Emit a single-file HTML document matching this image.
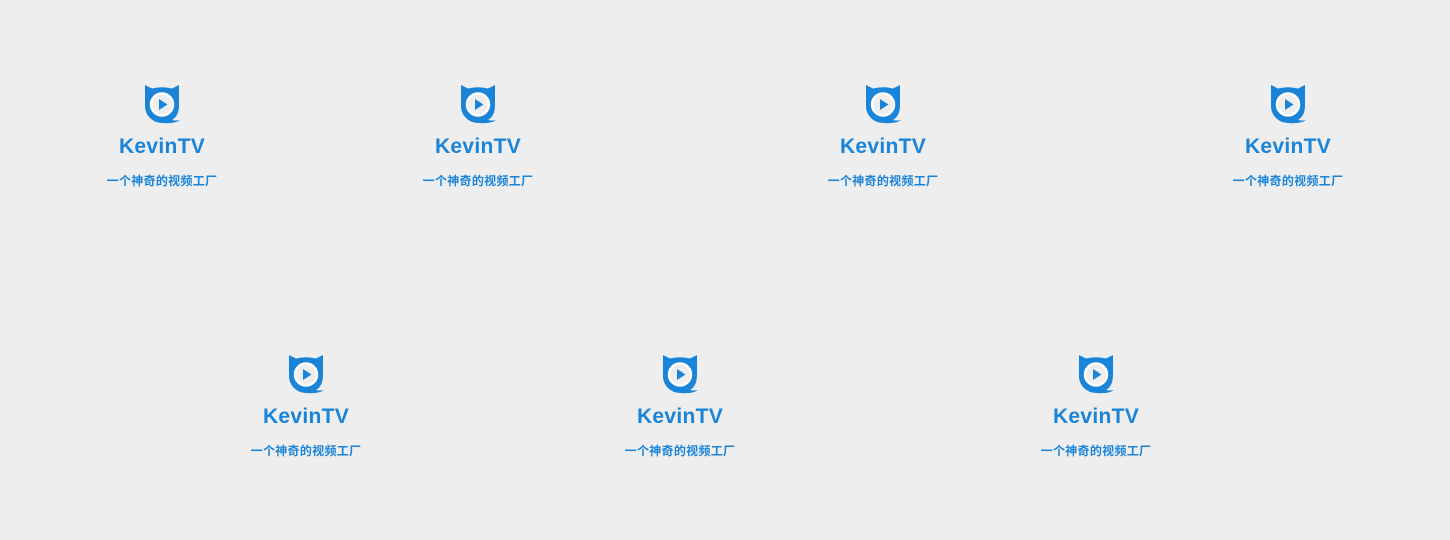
<!DOCTYPE html>
<html><head><meta charset="utf-8"><style>
html,body{margin:0;padding:0}
body{width:1450px;height:540px;background:#eeeeee;position:relative;overflow:hidden;font-family:"Liberation Sans","Noto Sans CJK SC",sans-serif}
.l{position:absolute;width:160px;margin-left:-80px;text-align:center;color:#1a84d8}
.l svg{display:block;margin:0 auto}
.t{font-size:21px;font-weight:bold;letter-spacing:0.3px;margin-top:11px;line-height:24px}
.s{font-size:12px;font-weight:bold;margin-top:15px;letter-spacing:0.3px;line-height:14px}
</style></head><body>
<div class="l" style="left:162px;top:84px">
<svg width="38" height="40" viewBox="0 0 38 40"><path d="M2,1 L9,4.5 Q19,2 29,4.5 L36,1 L36,21 Q36,32 29,36 Q33,37 37,36 Q32,40 19,39 A17,17 0 0 1 2,21 Z" fill="#1a84d8"/><circle cx="19" cy="20.5" r="11" fill="#eee" stroke="#fff" stroke-width="2.5"/><path d="M16,15 L24.5,20.5 L16,26 Z" fill="#1a84d8"/></svg>
<div class="t">KevinTV</div><div class="s">一个神奇的视频工厂</div></div>
<div class="l" style="left:478px;top:84px">
<svg width="38" height="40" viewBox="0 0 38 40"><path d="M2,1 L9,4.5 Q19,2 29,4.5 L36,1 L36,21 Q36,32 29,36 Q33,37 37,36 Q32,40 19,39 A17,17 0 0 1 2,21 Z" fill="#1a84d8"/><circle cx="19" cy="20.5" r="11" fill="#eee" stroke="#fff" stroke-width="2.5"/><path d="M16,15 L24.5,20.5 L16,26 Z" fill="#1a84d8"/></svg>
<div class="t">KevinTV</div><div class="s">一个神奇的视频工厂</div></div>
<div class="l" style="left:883px;top:84px">
<svg width="38" height="40" viewBox="0 0 38 40"><path d="M2,1 L9,4.5 Q19,2 29,4.5 L36,1 L36,21 Q36,32 29,36 Q33,37 37,36 Q32,40 19,39 A17,17 0 0 1 2,21 Z" fill="#1a84d8"/><circle cx="19" cy="20.5" r="11" fill="#eee" stroke="#fff" stroke-width="2.5"/><path d="M16,15 L24.5,20.5 L16,26 Z" fill="#1a84d8"/></svg>
<div class="t">KevinTV</div><div class="s">一个神奇的视频工厂</div></div>
<div class="l" style="left:1288px;top:84px">
<svg width="38" height="40" viewBox="0 0 38 40"><path d="M2,1 L9,4.5 Q19,2 29,4.5 L36,1 L36,21 Q36,32 29,36 Q33,37 37,36 Q32,40 19,39 A17,17 0 0 1 2,21 Z" fill="#1a84d8"/><circle cx="19" cy="20.5" r="11" fill="#eee" stroke="#fff" stroke-width="2.5"/><path d="M16,15 L24.5,20.5 L16,26 Z" fill="#1a84d8"/></svg>
<div class="t">KevinTV</div><div class="s">一个神奇的视频工厂</div></div>
<div class="l" style="left:306px;top:354px">
<svg width="38" height="40" viewBox="0 0 38 40"><path d="M2,1 L9,4.5 Q19,2 29,4.5 L36,1 L36,21 Q36,32 29,36 Q33,37 37,36 Q32,40 19,39 A17,17 0 0 1 2,21 Z" fill="#1a84d8"/><circle cx="19" cy="20.5" r="11" fill="#eee" stroke="#fff" stroke-width="2.5"/><path d="M16,15 L24.5,20.5 L16,26 Z" fill="#1a84d8"/></svg>
<div class="t">KevinTV</div><div class="s">一个神奇的视频工厂</div></div>
<div class="l" style="left:680px;top:354px">
<svg width="38" height="40" viewBox="0 0 38 40"><path d="M2,1 L9,4.5 Q19,2 29,4.5 L36,1 L36,21 Q36,32 29,36 Q33,37 37,36 Q32,40 19,39 A17,17 0 0 1 2,21 Z" fill="#1a84d8"/><circle cx="19" cy="20.5" r="11" fill="#eee" stroke="#fff" stroke-width="2.5"/><path d="M16,15 L24.5,20.5 L16,26 Z" fill="#1a84d8"/></svg>
<div class="t">KevinTV</div><div class="s">一个神奇的视频工厂</div></div>
<div class="l" style="left:1096px;top:354px">
<svg width="38" height="40" viewBox="0 0 38 40"><path d="M2,1 L9,4.5 Q19,2 29,4.5 L36,1 L36,21 Q36,32 29,36 Q33,37 37,36 Q32,40 19,39 A17,17 0 0 1 2,21 Z" fill="#1a84d8"/><circle cx="19" cy="20.5" r="11" fill="#eee" stroke="#fff" stroke-width="2.5"/><path d="M16,15 L24.5,20.5 L16,26 Z" fill="#1a84d8"/></svg>
<div class="t">KevinTV</div><div class="s">一个神奇的视频工厂</div></div>
</body></html>
